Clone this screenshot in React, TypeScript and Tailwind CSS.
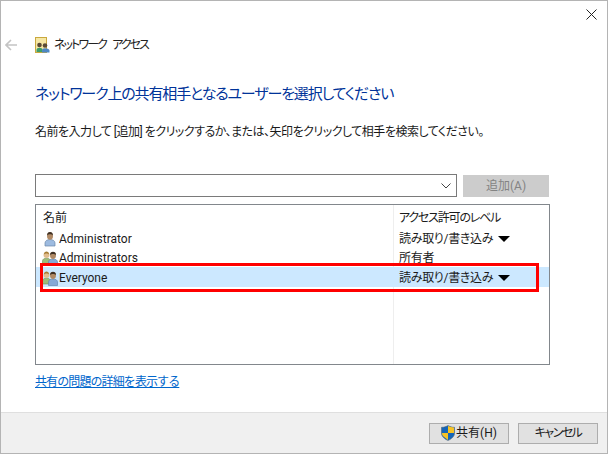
const font = { fontFamily: 'Roboto, "Noto Sans CJK JP", sans-serif' };

function UserIcon() {
  return (
    <svg width="16" height="16" viewBox="0 0 16 16" className="shrink-0">
      <path d="M3 15v-3c0-2 2-3.500 5-3.500s5 1.500 5 3.500v3z" fill="#9dbbe0" stroke="#6a86a8" strokeWidth="0.7" />
      <ellipse cx="8" cy="5" rx="3" ry="3.800" fill="#b08a66" />
      <path d="M5 4.500c0-2.500 1.500-3.500 3-3.500s3 1 3 3.500c-1-1-2-1.200-3-1.200s-2 .2-3 1.200z" fill="#3e3024" />
    </svg>
  );
}

function GroupIcon() {
  return (
    <svg width="17" height="16" viewBox="0 0 17 16" className="shrink-0">
      <path d="M0.500 14v-3c0-1.700 1.600-2.800 4-2.800s4 1.100 4 2.800v3z" fill="#9dbb78" stroke="#6f8f50" strokeWidth="0.6" />
      <circle cx="4.500" cy="5" r="3" fill="#e2bd8e" />
      <path d="M2 4.500c0-2 1.200-3 2.500-3s2.500 1 2.500 3c-1-.8-1.600-1-2.500-1s-1.500.2-2.500 1z" fill="#a67c34" />
      <path d="M6.500 15.500v-3.500c0-1.800 1.800-3 4.500-3s4.500 1.200 4.500 3v3.500z" fill="#86a9d6" stroke="#5d7ea6" strokeWidth="0.6" />
      <ellipse cx="11" cy="5.500" rx="3" ry="3.400" fill="#b08a66" />
      <path d="M8 5c0-2.200 1.500-3.200 3-3.200s3 1 3 3.200c-1-.9-2-1.100-3-1.100s-2 .2-3 1.100z" fill="#3e3024" />
    </svg>
  );
}

function Row({ name, level, group, menu, selected }: { name: string; level: string; group?: boolean; menu?: boolean; selected?: boolean }) {
  return (
    <div className={`flex items-center pt-[1px] ${selected ? "h-[20px] bg-[#cce8ff]" : "h-[19px]"}`}>
      <div className="flex w-[356px] items-center pl-[6px]">
        <span className="flex w-[16px] justify-center">{group ? <GroupIcon /> : <UserIcon />}</span>
        <span className="pl-[1px]">{name}</span>
      </div>
      <div className="flex items-center pl-[7px]">
        <span className="tracking-[-0.300px] [font-feature-settings:'palt']">{level}</span>
        {menu && <span className="ml-[5px] h-0 w-0 border-x-[6px] border-t-[6px] border-x-transparent border-t-black" />}
      </div>
    </div>
  );
}

export default function App() {
  return (
    <div style={font} className="flex h-[454px] w-[608px] flex-col border border-[#b4b4b4] bg-white text-[12px] text-[#1a1a1a]">
      <div className="flex h-[29px] justify-end pr-[10px] pt-[8px]">
        <svg width="11" height="11" viewBox="0 0 11 11">
          <path d="M0.500 0.500l10 10M10.500 0.500l-10 10" stroke="#222" strokeWidth="1" fill="none" />
        </svg>
      </div>

      <div className="flex h-[30px] items-center">
        <svg width="12" height="12" viewBox="0 0 12 12" className="ml-[4px]">
          <path d="M6 1L1 6l5 5M1 6h11" stroke="#c4c4c4" strokeWidth="1.600" fill="none" />
        </svg>
        <svg width="15" height="16" viewBox="0 0 15 16" className="ml-[18px]">
          <rect x="0.500" y="0.500" width="11" height="15" fill="#f6e7a4" stroke="#c9a83e" />
          <circle cx="4.500" cy="8" r="2.300" fill="#5b4a36" />
          <circle cx="10" cy="8.500" r="2.300" fill="#5b4a36" />
          <path d="M1.500 15v-2c0-1.500 1.300-2.300 3-2.300s3 .8 3 2.300v2z" fill="#3f9d6a" />
          <path d="M7 15.500v-2c0-1.500 1.300-2.300 3-2.300s4.500.8 4.500 2.300v2z" fill="#4d87c4" />
        </svg>
        <span className="ml-[4px] tracking-[-1.900px] text-[#222] [font-feature-settings:'palt'] [word-spacing:5px]">ネットワーク アクセス</span>
      </div>

      <div className="flex flex-col pl-[34px] pr-[58px]">
        <h1 className="mt-[23px] text-[15px] leading-[22px] font-normal tracking-[-1.150px] text-[#003399] [font-feature-settings:'palt']">
          ネットワーク上の共有相手となるユーザーを選択してください
        </h1>
        <p className="mt-[18px] leading-[18px] tracking-[-0.500px] [font-feature-settings:'palt']">
          名前を入力して [追加] をクリックするか、または、矢印をクリックして相手を検索してください。
        </p>

        <div className="mt-[33px] flex items-center gap-[6px]">
          <div className="flex h-[23px] w-[423px] items-center justify-end border border-[#7a7a7a] pr-[5px]">
            <svg width="10" height="6" viewBox="0 0 10 6">
              <path d="M0.500 0.500L5 5l4.500-4.500" stroke="#444" strokeWidth="1" fill="none" />
            </svg>
          </div>
          <button className="h-[22px] w-[86px] bg-[#cccccc] text-[#838383]">追加(A)</button>
        </div>

        <div className="relative mt-[7px] h-[161px] w-[515px] border border-[#82878c]">
          <div className="absolute left-[357px] top-0 h-full w-px bg-[#eeeeee]" />
          <div className="flex h-[24px] items-center pt-[1px]">
            <span className="w-[356px] pl-[7px]">名前</span>
            <span className="pl-[7px] tracking-[-1.200px] [font-feature-settings:'palt']">アクセス許可のレベル</span>
          </div>
          <div className="relative">
            <Row name="Administrator" level="読み取り/書き込み" menu />
            <Row name="Administrators" level="所有者" group />
            <Row name="Everyone" level="読み取り/書き込み" group menu selected />
          </div>
          <div className="absolute left-[4px] top-[58px] h-[29px] w-[499px] border-[3px] border-[#ff0000]" />
        </div>

        <a className="mt-[8px] leading-[18px] tracking-[-0.900px] text-[#0066cc] underline">共有の問題の詳細を表示する</a>
      </div>

      <div className="mt-auto flex h-[41px] items-center justify-end gap-[9px] border-t border-[#dfdfdf] bg-[#f0f0f0] pr-[9px]">
        <button className="flex h-[21px] w-[80px] items-center justify-center gap-[1px] border border-[#adadad] bg-[#e1e1e1]">
          <svg width="14" height="16" viewBox="0 0 14 16">
            <path d="M7 0.500c2 1.200 4 1.800 6.500 1.800v6c0 3.200-3 5.700-6.500 7.200-3.500-1.500-6.500-4-6.500-7.200v-6C3 2.300 5 1.700 7 .5z" fill="#1565b8" stroke="#4a5a6a" strokeWidth="0.500" />
            <path d="M7 1v7H1v.3c0 1 .3 1.900.9 2.700L7 15V8h6V2.500C10.800 2.300 8.800 1.800 7 1z" fill="#f7c325" />
          </svg>
          <span>共有(H)</span>
        </button>
        <button className="h-[21px] w-[80px] border border-[#adadad] bg-[#e1e1e1] tracking-[-1.500px] [font-feature-settings:'palt']">キャンセル</button>
      </div>
    </div>
  );
}
